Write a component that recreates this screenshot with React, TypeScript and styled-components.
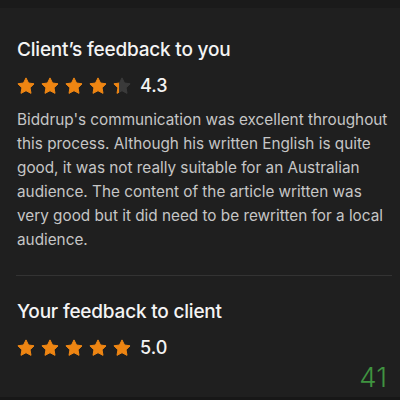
import styled, { createGlobalStyle } from "styled-components";

const GlobalStyle = createGlobalStyle`
  html, body {
    margin: 0;
    padding: 0;
    background: #1f1f1f;
  }
  body {
    font-family: Inter, "Liberation Sans", Arial, sans-serif;
    -webkit-font-smoothing: antialiased;
  }
`;

const Screen = styled.div`
  width: 400px;
  height: 400px;
  display: flex;
  flex-direction: column;
  background: #1f1f1f;
  overflow: hidden;
`;

const TopBar = styled.div`
  height: 10px;
  background: #1a1a1a;
`;

const Section = styled.section`
  padding: 0 8px 0 17px;
  display: flex;
  flex-direction: column;
`;

const Heading = styled.h2<{ $top: number }>`
  margin: ${(p) => p.$top}px 0 0;
  font-size: 19px;
  font-weight: 500;
  line-height: 24px;
  color: #f4f4f4;
  letter-spacing: -0.2px;
`;

const RatingRow = styled.div`
  display: flex;
  align-items: center;
  gap: 6px;
  margin-top: 12px;
  height: 24px;
`;

const Stars = styled.div`
  display: flex;
  gap: 6px;
`;

const Score = styled.span`
  margin-left: 3px;
  font-size: 18px;
  font-weight: 500;
  color: #f2f2f2;
`;

const Comment = styled.p`
  margin: 10px 0 0;
  font-size: 15.3px;
  line-height: 24px;
  color: #c6c6c6;
`;

const Divider = styled.hr`
  margin: 23px 0 0 -1px;
  border: 0;
  height: 1px;
  background: #333;
`;

const Footer = styled.div`
  flex: 1;
  display: flex;
  justify-content: flex-end;
  align-items: flex-end;
  padding: 0 13px 3px;
  font-size: 27.5px;
  font-weight: 300;
  color: #3f9440;
`;

const BottomBar = styled.div`
  height: 4px;
  background: #171717;
`;

const STAR =
  "M9 0.9l2.5 5.1 5.6 0.8-4.05 3.95 0.95 5.6L9 13.7l-5 2.65 0.95-5.6L0.9 6.8l5.6-0.8z";

// fill: 0..1 share of the star that is coloured
function Star({ fill, id }: { fill: number; id: string }) {
  return (
    <svg width="18" height="18" viewBox="0 0 18 18">
      <defs>
        <linearGradient id={id}>
          <stop offset={fill} stopColor="#ee8512" />
          <stop offset={fill} stopColor="#3a3a3a" />
        </linearGradient>
      </defs>
      <path
        d={STAR}
        fill={`url(#${id})`}
        stroke={`url(#${id})`}
        strokeWidth="1"
        strokeLinejoin="round"
      />
    </svg>
  );
}

function Rating({ value, name }: { value: number; name: string }) {
  return (
    <RatingRow>
      <Stars>
        {[0, 1, 2, 3, 4].map((i) => (
          <Star
            key={i}
            id={`${name}-${i}`}
            fill={Math.max(0, Math.min(1, value - i))}
          />
        ))}
      </Stars>
      <Score>{value.toFixed(1)}</Score>
    </RatingRow>
  );
}

export default function App() {
  return (
    <>
      <GlobalStyle />
      <Screen>
        <TopBar />
        <Section>
          <Heading $top={30}>Client’s feedback to you</Heading>
          <Rating value={4.3} name="client" />
          <Comment>
            Biddrup's communication was excellent throughout this process.
            Although his written English is quite good, it was not really
            suitable for an Australian audience. The content of the article
            written was very good but it did need to be rewritten for a local
            audience.
          </Comment>
          <Divider />
          <Heading $top={24}>Your feedback to client</Heading>
          <Rating value={5} name="own" />
        </Section>
        <Footer>41</Footer>
        <BottomBar />
      </Screen>
    </>
  );
}
